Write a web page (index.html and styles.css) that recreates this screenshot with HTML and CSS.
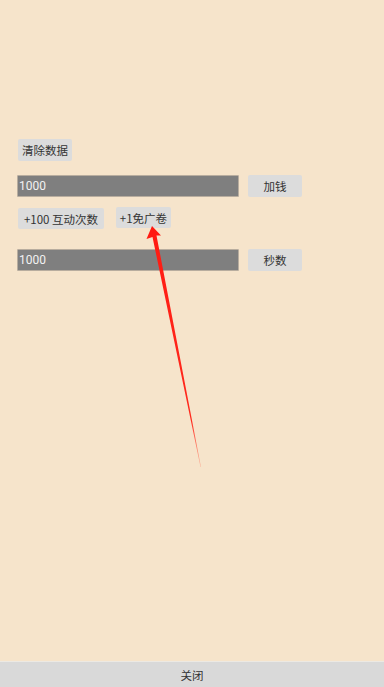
FILE: index.html
```html
<!DOCTYPE html>
<html lang="zh">
<head>
<meta charset="utf-8">
<link rel="stylesheet" href="styles.css">
</head>
<body>
<div class="page">
  <main class="panel">
    <div class="row row-clear">
      <button class="btn btn-clear">清除数据</button>
    </div>
    <div class="row row-input">
      <div class="field">1000</div>
      <button class="btn btn-side">加钱</button>
    </div>
    <div class="row row-pair">
      <button class="btn btn-hundred">+100 互动次数</button>
      <button class="btn btn-ticket">+1免广卷</button>
    </div>
    <div class="row row-input row-seconds">
      <div class="field">1000</div>
      <button class="btn btn-side">秒数</button>
    </div>
  </main>
  <footer class="closebar">关闭</footer>
</div>
<svg class="arrow" width="384" height="687" viewBox="0 0 384 687">
  <defs>
    <linearGradient id="fade" x1="152" y1="230" x2="201" y2="467" gradientUnits="userSpaceOnUse">
      <stop offset="0" stop-color="#ff1a12"/>
      <stop offset="0.8" stop-color="#ff2a1e"/>
      <stop offset="1" stop-color="#ff6a50" stop-opacity="0.4"/>
    </linearGradient>
  </defs>
  <polygon points="152,226 161,235.5 156.5,235.5 201,467 200.5,467 152.5,237 146.5,239" fill="url(#fade)"/>
</svg>
</body>
</html>
```
FILE: styles.css
```css
html, body {
  margin: 0;
  padding: 0;
  height: 100%;
}
body {
  background: #f6e4cb;
  font-family: "Noto Sans CJK SC", "Noto Sans", sans-serif;
  color: #333;
  overflow: hidden;
  position: relative;
}
.page {
  display: flex;
  flex-direction: column;
  height: 687px;
}
.panel {
  flex: 1;
  display: flex;
  flex-direction: column;
  padding: 139px 0 0 17px;
}
.row {
  display: flex;
  align-items: center;
}
.btn {
  font-family: "Noto Sans CJK SC", "Noto Sans", sans-serif;
  font-size: 11.5px;
  color: #333;
  background: #dcdcdc;
  border: none;
  border-radius: 2px;
  padding: 0;
  margin: 0;
  height: 22px;
  line-height: 22px;
  display: flex;
  align-items: center;
  justify-content: center;
}
.btn-clear {
  width: 54px;
  margin-left: 1px;
}
.row-input {
  margin-top: 14px;
  gap: 9px;
}
.field {
  width: 219px;
  height: 20px;
  background: #7f7f7f;
  border: 1px solid #b8ad9f;
  border-radius: 1px;
  color: #f2f2f2;
  font-family: "Roboto", "Noto Sans", sans-serif;
  font-size: 12px;
  line-height: 20px;
  padding-left: 1px;
  box-sizing: content-box;
}
.row-pair {
  margin-top: 10px;
  align-items: flex-start;
  gap: 12px;
}
.btn-hundred {
  width: 86px;
  height: 21px;
  margin-left: 1px;
  margin-top: 1px;
}
.btn-ticket {
  width: 55px;
  height: 21px;
}
.row-seconds {
  margin-top: 20px;
}
.btn-side {
  width: 54px;
}
.closebar {
  height: 25px;
  background: #d9d9d9;
  border-top: 1px solid #ece9e3;
  display: flex;
  align-items: center;
  justify-content: center;
  font-size: 11.5px;
  color: #333;
}
.arrow {
  position: absolute;
  left: 0;
  top: 0;
  pointer-events: none;
}
```
